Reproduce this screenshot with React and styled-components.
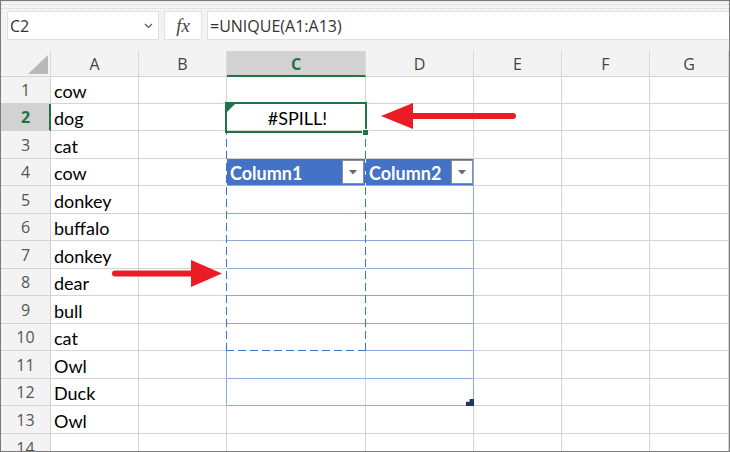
import React from 'react';
import styled, { createGlobalStyle } from 'styled-components';

const GlobalStyle = createGlobalStyle`
  html, body { margin: 0; padding: 0; background: #fff; }
  #root { width: 730px; height: 452px; }
`;

const C = {
  grid: '#d4d4d4',
  header: '#f3f3f3',
  headerSel: '#d2d2d2',
  green: '#217346',
  tableHead: '#4472c4',
  tableLine: '#8ea9db',
  spill: '#3b73c8',
  red: '#ec1c24',
  navy: '#1c3a5e',
};

const LETTERS = ['A', 'B', 'C', 'D', 'E', 'F', 'G'];
const ROW_H = [27, 27, 28, 27, 28, 27, 28, 27, 28, 27, 28, 27, 28, 28];
const DATA = ['cow', 'dog', 'cat', 'cow', 'donkey', 'buffalo', 'donkey', 'dear', 'bull', 'cat', 'Owl', 'Duck', 'Owl', ''];

const Frame = styled.div`
  position: relative;
  width: 730px;
  height: 452px;
  box-sizing: border-box;
  border: 1px solid #7a7a7a;
  background: ${C.header};
  display: flex;
  flex-direction: column;
  overflow: hidden;
`;

const Toolbar = styled.div`
  position: relative;
  flex: 0 0 50px;
  box-sizing: border-box;
  padding: 9px 0 0 6px;
  display: flex;
  align-items: flex-start;
  gap: 5px;
  border-top: 1px solid #e9e9e9;
  &::before {
    content: '';
    position: absolute;
    left: 0;
    right: 0;
    top: 2px;
    height: 3px;
    border-top: 1px dotted #d6d6d6;
    border-bottom: 1px dotted #d6d6d6;
  }
`;

const BarBox = styled.div`
  height: 29px;
  box-sizing: border-box;
  background: #fff;
  border: 1px solid #e1e1e1;
  display: flex;
  align-items: center;
  font-family: 'Open Sans', 'Noto Sans', sans-serif;
  font-size: 16px;
  color: #333;
`;

const NameBox = styled(BarBox)`
  width: 152px;
  padding: 0 5px 0 2px;
  justify-content: space-between;
`;

const FxBox = styled(BarBox)`
  width: 38px;
  justify-content: center;
  font-family: 'Liberation Serif', 'DejaVu Serif', serif;
  font-style: italic;
  font-size: 19px;
  color: #444;
`;

const FormulaBox = styled(BarBox)`
  flex: 1;
  border-right: none;
  padding-left: 2px;
`;

const Sheet = styled.div`
  position: relative;
  display: grid;
  grid-template-columns: 50px 88px 88px 139px 108px 88px 88px 1fr;
  grid-template-rows: 26px ${ROW_H.map((h) => `${h}px`).join(' ')};
  background: #fff;
`;

const Corner = styled.div`
  grid-row: 1;
  grid-column: 1;
  box-sizing: border-box;
  background: ${C.header};
  border-right: 1px solid #d9d9d9;
  border-bottom: 1px solid ${C.grid};
  display: flex;
  align-items: flex-end;
  justify-content: flex-end;
  padding: 0 2px 2px 0;
`;

const CornerTriangle = styled.div`
  width: 20px;
  height: 19px;
  background: #b8b8b8;
  clip-path: polygon(100% 0, 100% 100%, 0 100%);
`;

const ColHead = styled.div`
  grid-row: 1;
  grid-column: ${(p) => p.$c};
  box-sizing: border-box;
  background: ${(p) => (p.$sel ? C.headerSel : C.header)};
  border-right: 1px solid #d9d9d9;
  border-bottom: ${(p) => (p.$sel ? `2px solid ${C.green}` : `1px solid ${C.grid}`)};
  display: flex;
  align-items: center;
  justify-content: center;
  padding-top: ${(p) => (p.$sel ? '1px' : '0')};
  font-family: 'Open Sans', 'Noto Sans', sans-serif;
  font-size: 16px;
  font-weight: ${(p) => (p.$sel ? 700 : 400)};
  color: ${(p) => (p.$sel ? C.green : '#444')};
`;

const RowHead = styled.div`
  grid-column: 1;
  grid-row: ${(p) => p.$r};
  box-sizing: border-box;
  background: ${(p) => (p.$sel ? C.headerSel : C.header)};
  border-right: ${(p) => (p.$sel ? `2px solid ${C.green}` : '1px solid #cfcfcf')};
  border-bottom: 1px solid ${C.grid};
  display: flex;
  align-items: center;
  justify-content: center;
  padding-left: ${(p) => (p.$sel ? '1px' : '0')};
  font-family: 'Open Sans', 'Noto Sans', sans-serif;
  font-size: 16px;
  font-weight: ${(p) => (p.$sel ? 700 : 400)};
  color: ${(p) => (p.$sel ? C.green : '#555')};
`;

const Cell = styled.div`
  position: relative;
  grid-row: ${(p) => p.$r};
  grid-column: ${(p) => p.$c};
  box-sizing: border-box;
  min-width: 0;
  background: ${(p) => p.$bg || '#fff'};
  border-right: 1px solid ${(p) => p.$br || C.grid};
  border-bottom: 1px solid ${(p) => p.$bb || C.grid};
  display: flex;
  align-items: center;
  justify-content: ${(p) => (p.$center ? 'center' : 'space-between')};
  padding: 2px 0 0 3px;
  font-family: Lato, 'Open Sans', sans-serif;
  font-size: 18px;
  line-height: 1;
  font-weight: ${(p) => (p.$bold ? 700 : 400)};
  color: ${(p) => (p.$bold ? '#fff' : '#000')};
  white-space: nowrap;
`;

const FilterButton = styled.div`
  align-self: stretch;
  width: 22px;
  margin: -1px ${(p) => p.$mr}px 1px 0;
  box-sizing: border-box;
  background: #fff;
  border: 1px solid #8f8f8f;
  display: flex;
  align-items: center;
  justify-content: center;
  &::after {
    content: '';
    width: 9px;
    height: 5px;
    background: #6b6b6b;
    clip-path: polygon(0 0, 100% 0, 50% 100%);
  }
`;

const ResizeHandle = styled.div`
  position: absolute;
  right: -1px;
  bottom: -1px;
  width: 8px;
  height: 7px;
  background: ${C.navy};
  clip-path: polygon(45% 0, 100% 0, 100% 100%, 0 100%, 0 40%, 45% 40%);
`;

const dash = (dir) =>
  `linear-gradient(${dir}, ${C.spill} 0 8px, #fff 8px 12px)`;

const SpillOutline = styled.div`
  grid-column: 4;
  grid-row: 3 / 12;
  margin: -1px 0 0 -1px;
  pointer-events: none;
  z-index: 2;
  background:
    ${dash('to right')} left top / 12px 1px repeat-x,
    ${dash('to right')} left bottom / 12px 1px repeat-x,
    ${dash('to bottom')} left top / 1px 12px repeat-y,
    ${dash('to bottom')} right top / 1px 12px repeat-y;
`;

const Selection = styled.div`
  position: relative;
  grid-column: 4;
  grid-row: 3;
  margin: -2px -1px -2px -2px;
  border: 2px solid ${C.green};
  pointer-events: none;
  z-index: 3;
`;

const ErrorMark = styled.div`
  position: absolute;
  left: -1px;
  top: -1px;
  width: 10px;
  height: 10px;
  background: ${C.green};
  clip-path: polygon(0 0, 100% 0, 0 100%);
`;

const FillHandle = styled.div`
  position: absolute;
  right: -4px;
  bottom: -5px;
  width: 7px;
  height: 7px;
  box-sizing: border-box;
  background: ${C.green};
  border: 1px solid #fff;
`;

const Annotations = styled.svg`
  position: absolute;
  left: -1px;
  top: -1px;
  width: 730px;
  height: 452px;
  pointer-events: none;
  z-index: 10;
`;

const Chevron = () => (
  <svg width="9" height="6" viewBox="0 0 9 6">
    <path d="M1 1 L4.5 4.5 L8 1" fill="none" stroke="#555" strokeWidth="1.2" />
  </svg>
);

function cellProps(r, c) {
  // c: 1..7 for A..G ; r: 1..14
  const inTable = r >= 4 && r <= 12;
  const p = {};
  if (inTable && (c === 3 || c === 4)) p.$bb = C.tableLine;
  if (inTable && (c === 2 || c === 4)) p.$br = C.tableLine;
  if (r === 4 && c === 3) p.$br = C.tableHead;
  if (r === 4 && (c === 3 || c === 4)) {
    p.$bg = C.tableHead;
    p.$bold = true;
  }
  return p;
}

export default function App() {
  const cells = [];
  for (let r = 1; r <= 14; r++) {
    for (let c = 1; c <= 7; c++) {
      let content = null;
      let center = false;
      if (c === 1) content = DATA[r - 1];
      if (r === 2 && c === 3) {
        content = '#SPILL!';
        center = true;
      }
      if (r === 4 && c === 3)
        content = (
          <>
            <span>Column1</span>
            <FilterButton $mr={1} />
          </>
        );
      if (r === 4 && c === 4)
        content = (
          <>
            <span>Column2</span>
            <FilterButton $mr={0} />
          </>
        );
      cells.push(
        <Cell key={`${r}-${c}`} $r={r + 1} $c={c + 1} $center={center} {...cellProps(r, c)}>
          {content}
          {r === 12 && c === 4 && <ResizeHandle />}
        </Cell>
      );
    }
  }

  return (
    <>
      <GlobalStyle />
      <Frame>
        <Toolbar>
          <NameBox>
            <span>C2</span>
            <Chevron />
          </NameBox>
          <FxBox>fx</FxBox>
          <FormulaBox>=UNIQUE(A1:A13)</FormulaBox>
        </Toolbar>
        <Sheet>
          <Corner>
            <CornerTriangle />
          </Corner>
          {LETTERS.map((l, i) => (
            <ColHead key={l} $c={i + 2} $sel={l === 'C'}>
              {l}
            </ColHead>
          ))}
          {ROW_H.map((_, i) => (
            <RowHead key={i} $r={i + 2} $sel={i === 1}>
              {i + 1}
            </RowHead>
          ))}
          {cells}
          <SpillOutline />
          <Selection>
            <ErrorMark />
            <FillHandle />
          </Selection>
        </Sheet>
        <Annotations viewBox="0 0 730 452">
          <line x1="413" y1="116" x2="513" y2="116" stroke={C.red} strokeWidth="6" strokeLinecap="round" />
          <polygon points="381,116 413,103 413,129" fill={C.red} />
          <line x1="115" y1="273.5" x2="193" y2="273.5" stroke={C.red} strokeWidth="6" strokeLinecap="round" />
          <polygon points="191,260 222,273.5 191,287" fill={C.red} />
        </Annotations>
      </Frame>
    </>
  );
}
